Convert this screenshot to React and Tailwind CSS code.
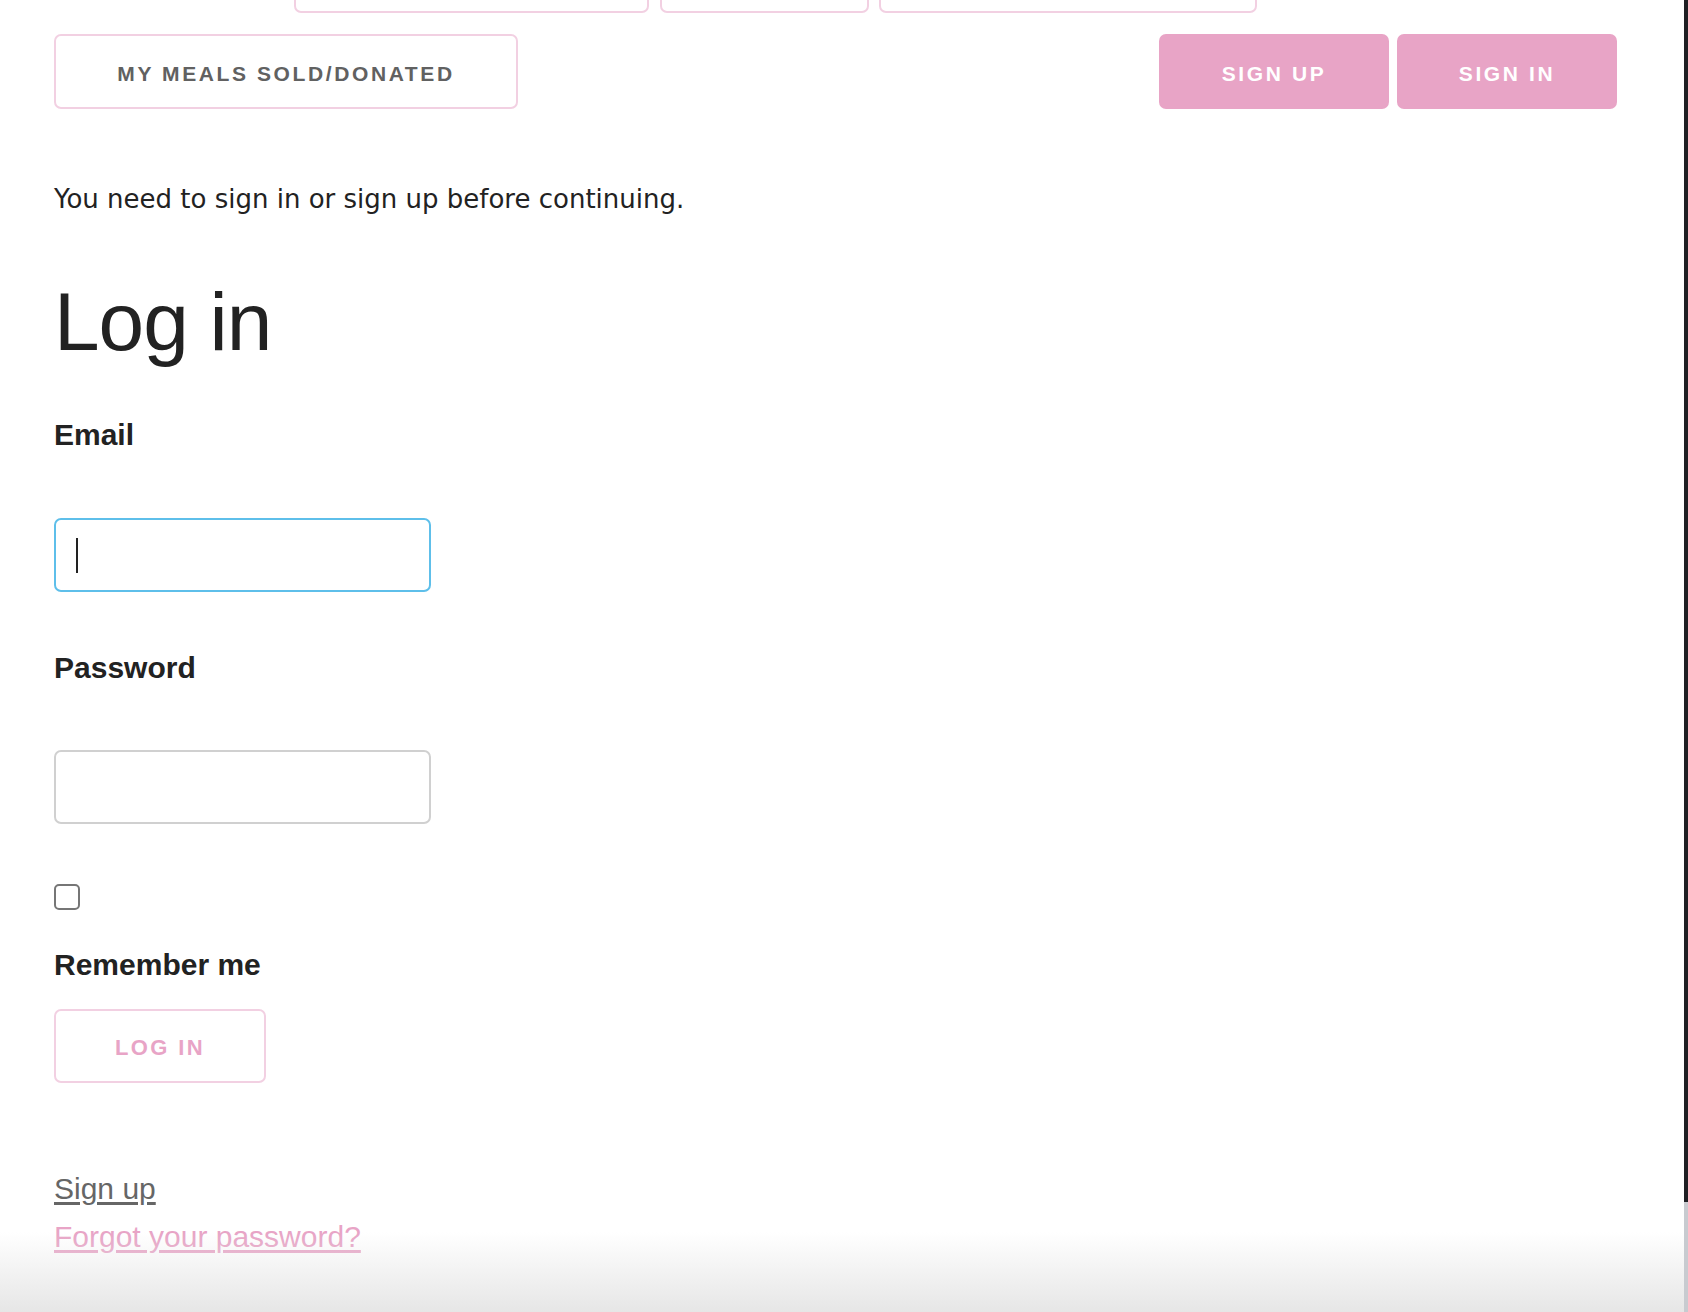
import { useState } from 'react';

const HELV = { fontFamily: '"Liberation Sans", Arial, sans-serif' };

// ─── Nav buttons ──────────────────────────────────────────────────────────────
function OutlineButton({ children, className = '' }) {
  return (
    <button
      className={`h-[75px] rounded-[7px] border-2 border-[#f2d0e2] bg-white pt-[5px] text-[21px] font-bold uppercase tracking-[2.6px] text-[#616161] ${className}`}
    >
      {children}
    </button>
  );
}

function PinkButton({ children, className = '' }) {
  return (
    <button
      className={`h-[75px] rounded-[7px] bg-[#e8a4c6] pt-[5px] text-[21px] font-bold uppercase tracking-[2.6px] text-white ${className}`}
    >
      {children}
    </button>
  );
}

export default function App() {
  const [email, setEmail] = useState('');
  const [password, setPassword] = useState('');
  const [remember, setRemember] = useState(false);

  return (
    <div className="relative flex h-[1312px] w-[1688px] overflow-hidden bg-white" style={HELV}>
      <div className="flex-1 pl-[54px] pr-[67px]">
        {/* ── Upper nav row (scrolled out of view) ─────────────────────────── */}
        <div className="-mt-[47px] ml-[240px] flex">
          <div className="h-[60px] w-[355px] rounded-[7px] border-2 border-[#f2d0e2]" />
          <div className="ml-[11px] h-[60px] w-[209px] rounded-[7px] border-2 border-[#f2d0e2]" />
          <div className="ml-[10px] h-[60px] w-[378px] rounded-[7px] border-2 border-[#f2d0e2]" />
        </div>

        {/* ── Nav row ─────────────────────────────────────────────────────── */}
        <div className="mt-[21px] flex items-start justify-between">
          <OutlineButton className="w-[464px]">My meals sold/donated</OutlineButton>
          <div className="flex gap-[8px]">
            <PinkButton className="w-[230px]">Sign up</PinkButton>
            <PinkButton className="w-[220px]">Sign in</PinkButton>
          </div>
        </div>

        {/* ── Flash ───────────────────────────────────────────────────────── */}
        <p
          className="mt-[75px] text-[26px] leading-[30px] text-[#222]"
          style={{ fontFamily: '"DejaVu Sans", Verdana, sans-serif' }}
        >
          You need to sign in or sign up before continuing.
        </p>

        <h1 className="mt-[67px] text-[82px] leading-none tracking-[-1px] text-[#222]">Log in</h1>

        {/* ── Form ────────────────────────────────────────────────────────── */}
        <form onSubmit={(e) => e.preventDefault()} className="flex flex-col items-start">
          <label className="mt-[57px] text-[30px] font-bold leading-[30px] text-[#222]">Email</label>
          <div className="relative mt-[68px]">
            <input
              type="email"
              value={email}
              onChange={(e) => setEmail(e.target.value)}
              className="h-[74px] w-[377px] rounded-[7px] border-2 border-[#5ebfea] bg-white px-[22px] text-[26px] outline-none"
            />
            <span className="pointer-events-none absolute left-[22px] top-[20px] h-[35px] w-[2px] bg-[#222]" />
          </div>

          <label className="mt-[61px] text-[30px] font-bold leading-[30px] text-[#222]">Password</label>
          <input
            type="password"
            value={password}
            onChange={(e) => setPassword(e.target.value)}
            className="mt-[67px] h-[74px] w-[377px] rounded-[7px] border-2 border-[#d0d0d0] bg-white px-[22px] text-[26px] outline-none"
          />

          <input
            type="checkbox"
            checked={remember}
            onChange={(e) => setRemember(e.target.checked)}
            className="mt-[60px] h-[26px] w-[26px] appearance-none rounded-[5px] border-2 border-[#767676] bg-white"
          />
          <label className="mt-[40px] text-[30px] font-bold leading-[30px] text-[#222]">Remember me</label>

          <button
            type="submit"
            className="mt-[29px] h-[74px] w-[212px] rounded-[7px] border-2 border-[#f2d0e2] bg-white pt-[2px] text-[22px] font-bold uppercase tracking-[2.4px] text-[#e8a4c6]"
          >
            Log in
          </button>
        </form>

        {/* ── Links ───────────────────────────────────────────────────────── */}
        <div className="mt-[82px] flex flex-col items-start text-[30px] leading-[48px]">
          <a href="#" className="text-[#666] underline underline-offset-[3px]">Sign up</a>
          <a href="#" className="text-[#e8a4c6] underline underline-offset-[3px]">Forgot your password?</a>
        </div>
      </div>

      {/* ── Window edge ─────────────────────────────────────────────────────── */}
      <div className="flex w-[4px] flex-col">
        <div className="flex-1 bg-[#1f2024]" />
        <div className="h-[110px] bg-[#c8cbd0]" />
      </div>

      {/* bottom fade over the page */}
      <div className="pointer-events-none absolute bottom-0 left-0 h-[80px] w-[1684px] bg-gradient-to-b from-white/0 to-[#e6e6e6]" />
    </div>
  );
}
